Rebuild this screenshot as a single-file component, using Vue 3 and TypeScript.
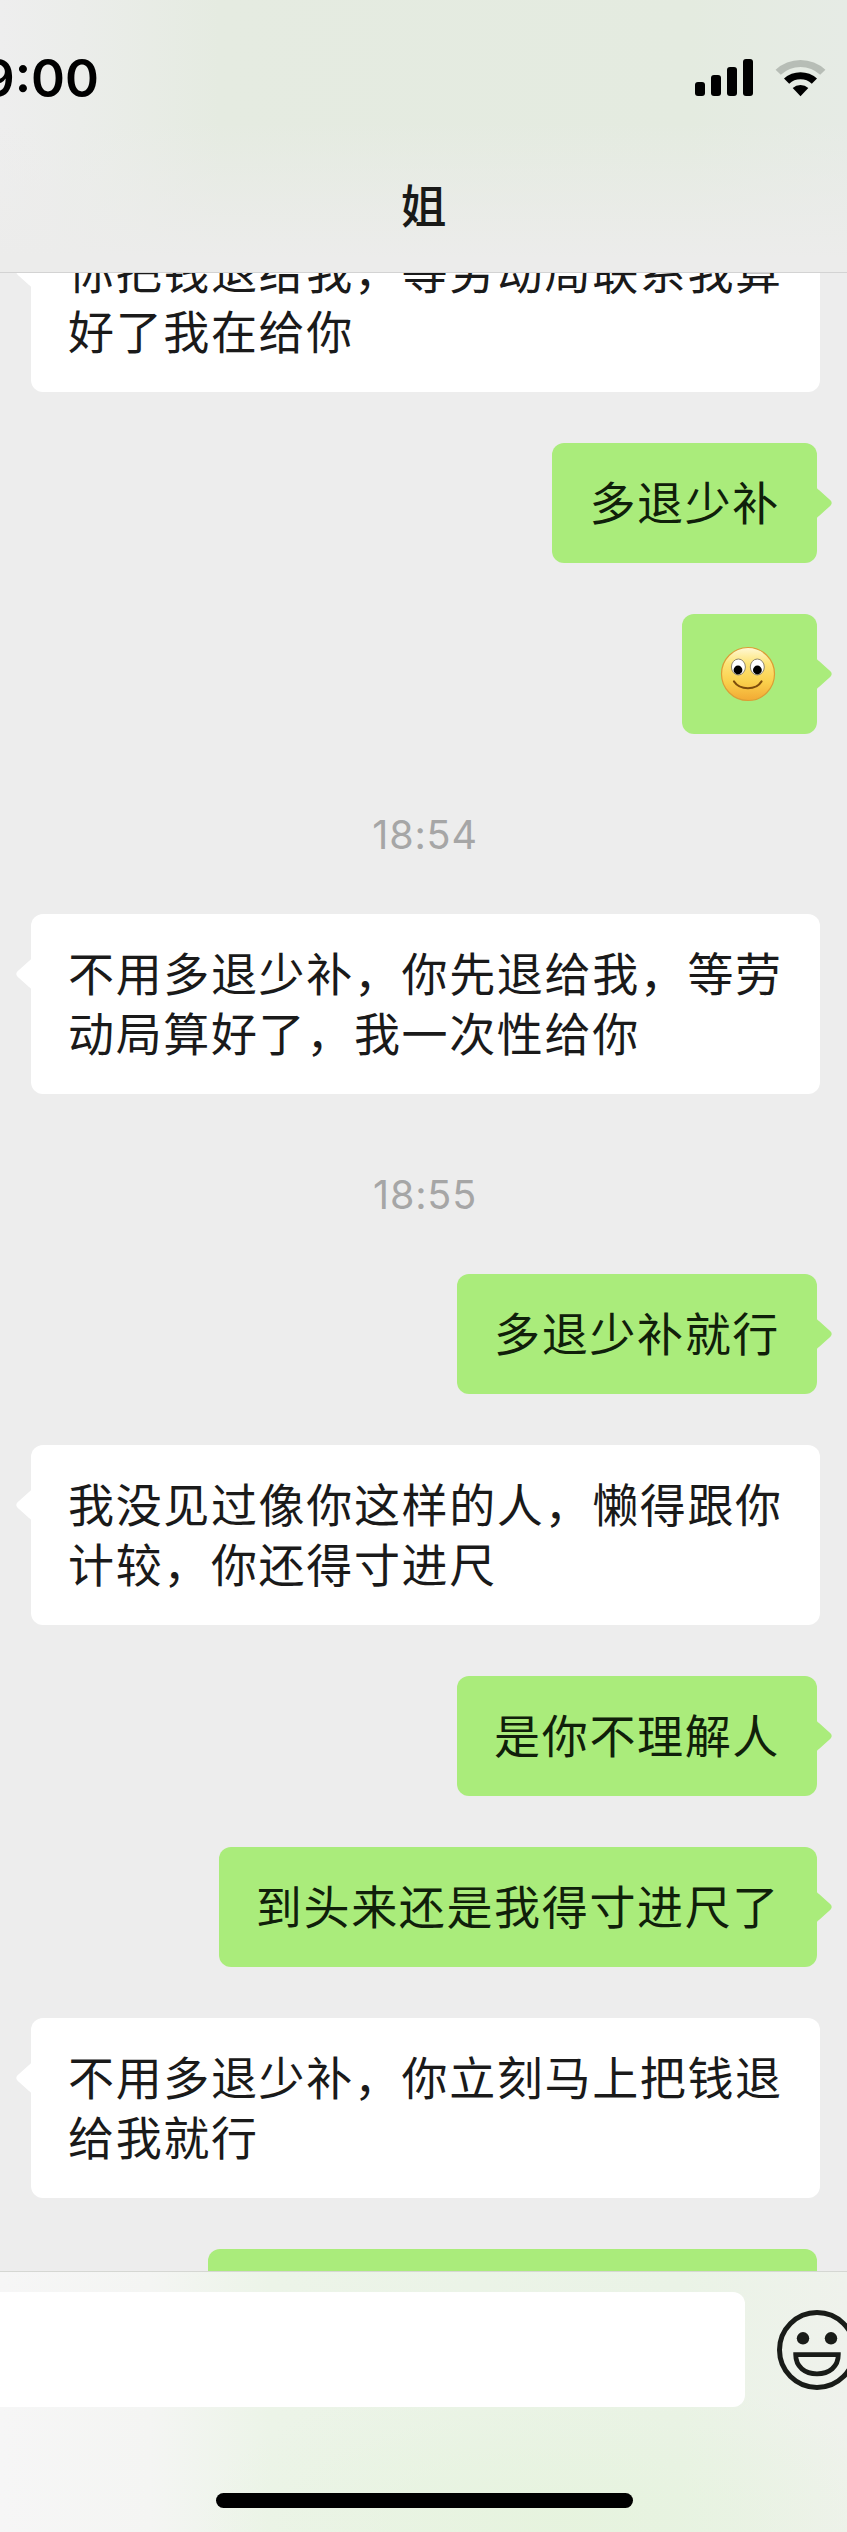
<script setup lang="ts">
interface Item {
  kind: 'in' | 'out' | 'time' | 'emoji' | 'partial'
  lines: string[]
}

const items: Item[] = [
  { kind: 'in', lines: ['你把钱退给我，等劳动局联系我算', '好了我在给你'] },
  { kind: 'out', lines: ['多退少补'] },
  { kind: 'emoji', lines: [] },
  { kind: 'time', lines: ['18:54'] },
  { kind: 'in', lines: ['不用多退少补，你先退给我，等劳', '动局算好了，我一次性给你'] },
  { kind: 'time', lines: ['18:55'] },
  { kind: 'out', lines: ['多退少补就行'] },
  { kind: 'in', lines: ['我没见过像你这样的人，懒得跟你', '计较，你还得寸进尺'] },
  { kind: 'out', lines: ['是你不理解人'] },
  { kind: 'out', lines: ['到头来还是我得寸进尺了'] },
  { kind: 'in', lines: ['不用多退少补，你立刻马上把钱退', '给我就行'] },
  { kind: 'partial', lines: [] },
]
</script>

<template>
  <div class="phone">
    <header class="header">
      <div class="status">
        <div class="clock">9:00</div>
        <div class="indicators">
          <svg class="signal" width="58" height="37" viewBox="0 0 58 37">
            <rect x="0" y="23" width="10" height="14" rx="3" />
            <rect x="16" y="16" width="10" height="21" rx="3" />
            <rect x="32" y="8" width="10" height="29" rx="3" />
            <rect x="48" y="0" width="10" height="37" rx="3" />
          </svg>
          <svg class="wifi" width="52" height="38" viewBox="0 0 52 38">
            <path d="M0.6 10.8A36.6 36.6 0 0 1 50.4 10.8L45.2 15.8A28.6 28.6 0 0 0 5.8 15.8Z" fill="#b7bdb6" />
            <path d="M9 19.6A24.3 24.3 0 0 1 42 19.6L36.8 24.8A16.5 16.5 0 0 0 14.2 24.8Z" />
            <path d="M17.7 29A11.4 11.4 0 0 1 33.3 29L25.5 37.2Z" />
          </svg>
        </div>
      </div>
      <h1 class="title">姐</h1>
    </header>

    <main class="chat">
      <template v-for="(item, i) in items" :key="i">
        <div v-if="item.kind === 'time'" class="time">{{ item.lines[0] }}</div>
        <div v-else class="bubble" :class="item.kind === 'in' ? 'in' : ['out', item.kind]">
          <svg v-if="item.kind === 'emoji'" class="smile" width="56" height="56" viewBox="0 0 56 56">
            <defs>
              <linearGradient id="face" x1="0" y1="0" x2="0" y2="1">
                <stop offset="0" stop-color="#fff8d6" />
                <stop offset="0.3" stop-color="#fde477" />
                <stop offset="0.65" stop-color="#fad04c" />
                <stop offset="1" stop-color="#f2a934" />
              </linearGradient>
            </defs>
            <circle cx="28" cy="28" r="26.5" fill="url(#face)" stroke="#dc9d35" stroke-width="1.2" />
            <ellipse cx="18.4" cy="21" rx="7" ry="8" fill="#fff" stroke="#8e856a" stroke-width="1" />
            <ellipse cx="37.3" cy="21" rx="7" ry="8" fill="#fff" stroke="#8e856a" stroke-width="1" />
            <circle cx="18" cy="24" r="4.4" />
            <circle cx="37.4" cy="24" r="4.4" />
            <path d="M14 35.5C20 44.5 36 44.5 41.5 35.5" fill="none" stroke="#7d4d0c" stroke-width="2.2" stroke-linecap="round" />
          </svg>
          <div v-for="line in item.lines" :key="line" class="line">{{ line }}</div>
          <svg class="tail" width="17" height="36" viewBox="0 0 17 36">
            <path d="M0 0C0 2.5 1.5 4 3 5L14.4 15.3Q17 18 14.4 20.7L3 31C1.5 32 0 33.5 0 36Z" />
          </svg>
        </div>
      </template>
    </main>

    <footer class="footer">
      <div class="composer">
        <div class="input"></div>
        <svg class="face-icon" width="80" height="80" viewBox="0 0 80 80">
          <circle cx="40" cy="40" r="37.5" fill="none" stroke="#191c18" stroke-width="5" />
          <circle cx="26" cy="28.3" r="6.2" fill="#191c18" />
          <circle cx="54" cy="28.3" r="6.2" fill="#191c18" />
          <path d="M18.7 44.6H61.3C61.3 57 52 63.8 40 63.8S18.7 57 18.7 44.6Z" fill="none" stroke="#191c18" stroke-width="4.8" />
        </svg>
      </div>
      <div class="home"></div>
    </footer>
  </div>
</template>

<style>
body {
  margin: 0;
  background: #ededed;
}
</style>

<style scoped>
.phone {
  width: 847px;
  height: 2532px;
  display: flex;
  flex-direction: column;
  overflow: hidden;
  background: #ededed;
  font-family: Inter, 'Noto Sans CJK SC', sans-serif;
}

.header {
  box-sizing: border-box;
  height: 273px;
  flex: none;
  border-bottom: 1px solid #d3d3d3;
  background:
    linear-gradient(to bottom, rgba(237, 237, 237, 0) 45%, #ececeb 95%),
    linear-gradient(to right, #eeeeee 0, #ebedea 80px, #e5ebe1 220px, #e4ebe0 690px, #e6ebe5 847px);
}

.status {
  height: 156px;
  display: flex;
  justify-content: space-between;
}

.clock {
  width: 99px;
  display: flex;
  justify-content: flex-end;
  font-size: 51.5px;
  font-weight: 600;
  line-height: 156px;
  white-space: nowrap;
  color: #000;
}

.indicators {
  display: flex;
  gap: 22px;
  padding: 59px 20px 0 0;
}

.title {
  margin: 0;
  padding-top: 17px;
  font-family: 'Noto Sans CJK SC', sans-serif;
  font-size: 46px;
  font-weight: 500;
  line-height: 60px;
  text-align: center;
  color: #191a18;
}

.chat {
  height: 1998px;
  flex: none;
  display: flex;
  flex-direction: column;
  gap: 51px;
  box-sizing: border-box;
  overflow: hidden;
}

.bubble {
  position: relative;
  box-sizing: border-box;
  flex: none;
  padding: 27px 37px 33px;
  border-radius: 12px;
}

.bubble:first-child {
  margin-top: -61px;
}

.in {
  align-self: flex-start;
  width: 789px;
  margin-left: 31px;
  background: #fff;
  color: #1a1a1a;
}

.out {
  align-self: flex-end;
  margin-right: 30px;
  background: #aaec7b;
  color: #10200a;
}

.line {
  font-family: 'Noto Sans CJK SC', sans-serif;
  font-size: 46px;
  letter-spacing: 1.65px;
  line-height: 60px;
  white-space: nowrap;
}

.tail {
  position: absolute;
  top: 42px;
  left: 100%;
  margin-left: -1px;
  fill: #aaec7b;
}

.in .tail {
  left: auto;
  right: 100%;
  margin: 0 -1px 0 0;
  transform: scaleX(-1);
  fill: #fff;
}

.emoji {
  display: flex;
  align-items: center;
  width: 135px;
  height: 120px;
  padding: 0 0 0 38px;
}

.partial {
  width: 609px;
  height: 120px;
}

.time {
  height: 78px;
  flex: none;
  box-sizing: border-box;
  padding: 22px 0 0 3px;
  font-size: 39.5px;
  letter-spacing: 0.8px;
  line-height: 56px;
  text-align: center;
  color: #a6a6a6;
}

.footer {
  box-sizing: border-box;
  height: 261px;
  flex: none;
  border-top: 1px solid #d5d7d3;
  background:
    radial-gradient(ellipse 360px 150px at 560px 250px, rgba(229, 243, 220, 0.8), rgba(234, 243, 229, 0)),
    linear-gradient(to right, #f6f6f6 0, #f4f5f3 150px, #ecf4e8 270px, #eaf3e6 680px, #eff2ec 847px);
}

.composer {
  display: flex;
  align-items: center;
  gap: 32px;
  padding-top: 20px;
}

.input {
  flex: none;
  width: 745px;
  height: 115px;
  border-radius: 0 12px 12px 0;
  background: #fff;
}

.face-icon {
  flex: none;
}

.home {
  width: 417px;
  height: 15px;
  margin: 86px 0 0 216px;
  border-radius: 8px;
  background: #000;
}
</style>
